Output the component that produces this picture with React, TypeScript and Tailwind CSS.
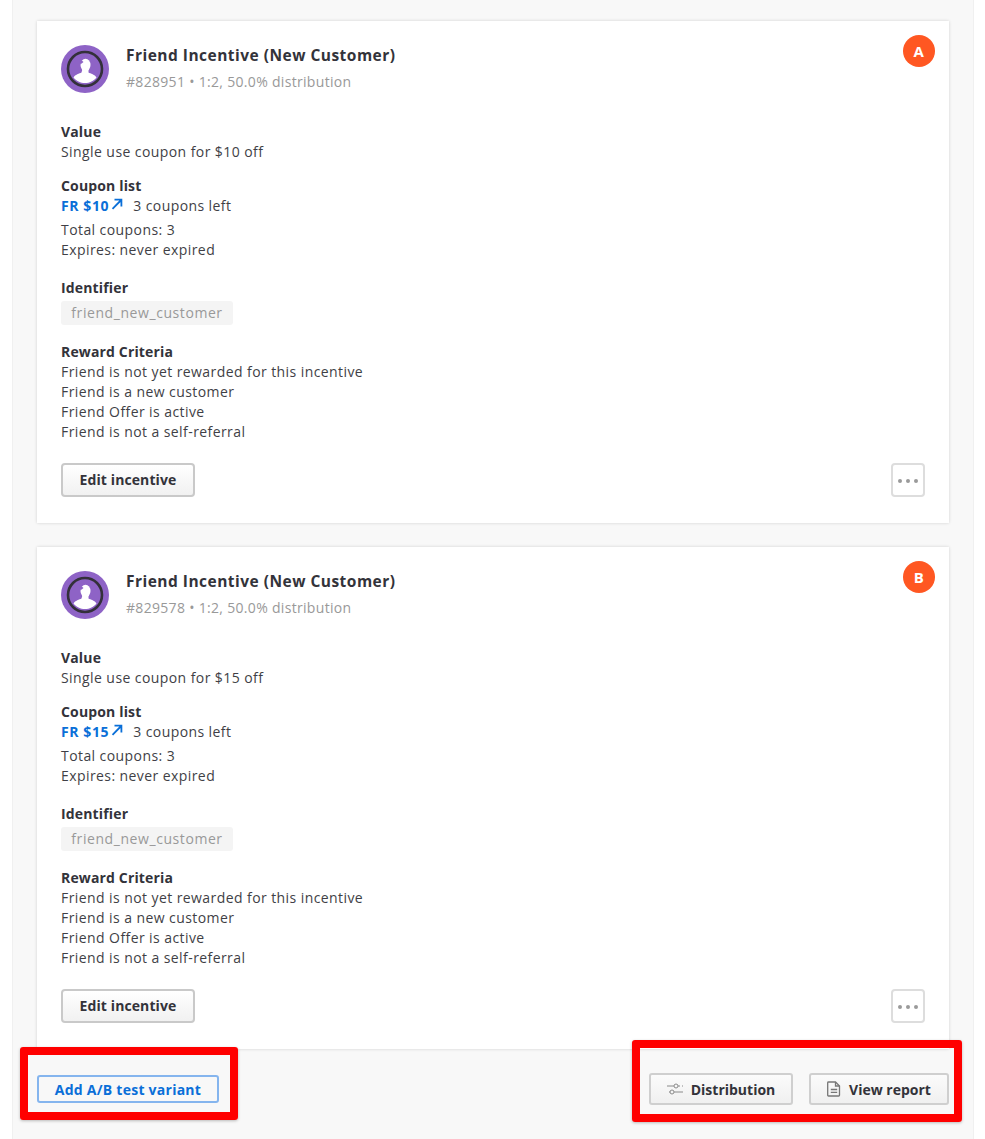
import React from "react";

const font = { fontFamily: '"Open Sans", "Liberation Sans", sans-serif' };

function Avatar() {
  return (
    <svg width="48" height="48" viewBox="0 0 48 48" className="shrink-0">
      <circle cx="24" cy="24" r="24" fill="#8e63c6" />
      <circle cx="24" cy="24" r="17" fill="none" stroke="#33303a" strokeWidth="2.6" />
      <ellipse cx="24.500" cy="20" rx="5" ry="6.300" fill="#fff" />
      <path d="M21.500 24h6v3.500c2 1.200 6.500 2 8 5-2.600 3.500-7 5.600-11.500 5.600s-8.900-2.100-11.500-5.600c1.500-3 6-3.800 8-5z" fill="#fff" />
      <path d="M18.500 13.500l4 3.500-3.200 2.500z" fill="#8e63c6" />
    </svg>
  );
}

function ExternalArrow() {
  return (
    <svg width="12" height="12" viewBox="0 0 12 12" fill="none" stroke="#0a6fd8" strokeWidth="1.8" className="ml-[2px] mt-[-2px]">
      <path d="M1.500 10.800 L10.200 2 M3.500 1.700 H10.400 V8.600" />
    </svg>
  );
}

function Heading({ children }: { children: React.ReactNode }) {
  return <div className="h-5 font-bold text-[#33333a] leading-5 tracking-[0.15px]">{children}</div>;
}

function Line({ children }: { children: React.ReactNode }) {
  return <div className="h-5 leading-5">{children}</div>;
}

function Card({ letter, id, amount, coupon }: { letter: string; id: string; amount: string; coupon: string }) {
  return (
    <div className="relative h-[502px] bg-white px-6 pt-6 shadow-[0_0_3px_rgba(0,0,0,0.16)] text-[14px] text-[#3f3f46] tracking-[0.42px]">
      <div className="absolute right-[14px] top-[14px] flex h-8 w-8 items-center justify-center rounded-full bg-[#ff5722] text-[15px] font-bold text-white">
        {letter}
      </div>
      <div className="flex h-12 items-start gap-[17px]">
        <Avatar />
        <div>
          <div className="mt-[-2px] h-[24px] text-[15.500px] font-bold leading-[24px] text-[#33333a] tracking-[0.48px]">
            Friend Incentive (New Customer)
          </div>
          <div className="mt-[5px] h-5 leading-5 text-[#999999] tracking-[0.31px]">#{id} • 1:2, 50.0% distribution</div>
        </div>
      </div>
      <div className="mt-[29px]">
        <Heading>Value</Heading>
        <Line>Single use coupon for ${amount} off</Line>
      </div>
      <div className="mt-[14px]">
        <Heading>Coupon list</Heading>
        <div className="mt-[-1px] flex h-5 items-center">
          <span className="font-bold text-[#0a6fd8] tracking-[0.6px]">{coupon}</span>
          <ExternalArrow />
          <span className="ml-[10px]">3 coupons left</span>
        </div>
        <div className="mt-[5px]">
          <Line>Total coupons: 3</Line>
          <Line>Expires: never expired</Line>
        </div>
      </div>
      <div className="mt-[18px]">
        <Heading>Identifier</Heading>
        <div className="mt-[3px] flex h-6 w-[172px] items-center justify-center rounded-[3px] bg-[#f4f4f4] pb-[2px] text-[#999999] tracking-[0.57px]">
          friend_new_customer
        </div>
      </div>
      <div className="mt-[17px]">
        <Heading>Reward Criteria</Heading>
        <Line>Friend is not yet rewarded for this incentive</Line>
        <Line>Friend is a new customer</Line>
        <Line>Friend Offer is active</Line>
        <Line>Friend is not a self-referral</Line>
      </div>
      <div className="mt-[21px] flex items-center justify-between">
        <button className="flex h-[34px] w-[134px] items-center justify-center rounded-[4px] border-2 border-[#c9c9c9] bg-gradient-to-b from-white to-[#f1f1f1] pb-[1px] font-bold text-[#33333a] tracking-[0.1px]">
          Edit incentive
        </button>
        <button className="flex h-[34px] w-[34px] items-center justify-center gap-[4px] rounded-[4px] border-2 border-[#dddddd] bg-white pt-[2px]">
          <span className="h-[4px] w-[4px] rounded-full bg-[#9a9a9a]" />
          <span className="h-[4px] w-[4px] rounded-full bg-[#9a9a9a]" />
          <span className="h-[4px] w-[4px] rounded-full bg-[#9a9a9a]" />
        </button>
      </div>
    </div>
  );
}

function SlidersIcon() {
  return (
    <svg width="16" height="14" viewBox="0 0 16 14" fill="none" stroke="#8a8a8a" strokeWidth="1">
      <path d="M0 4h7M11 4h2M15 4h1M2 10h1M7 10h9" />
      <circle cx="9" cy="4" r="2" />
      <circle cx="5" cy="10" r="2" />
    </svg>
  );
}

function DocIcon() {
  return (
    <svg width="14" height="16" viewBox="0 0 14 16" fill="none" stroke="#777777" strokeWidth="1.300">
      <path d="M1.500 1h7l4 4v9.200a.8.8 0 0 1-.8.8H1.500a.8.8 0 0 1-.8-.8V1.800a.8.8 0 0 1 .8-.8z" />
      <path d="M8.500 1v4h4M3.800 8.500h6.400M3.800 11.300h6.400" />
    </svg>
  );
}

export default function App() {
  return (
    <div className="relative h-[1139px] w-[985px] overflow-hidden bg-white" style={font}>
      <div className="ml-[12px] h-full w-[962px] border-x border-[#f0f0f0] bg-[#f8f8f8] pl-6 pr-6 pt-[21px]">
        <div className="flex flex-col gap-6">
          <Card letter="A" id="828951" amount="10" coupon="FR $10" />
          <Card letter="B" id="829578" amount="15" coupon="FR $15" />
        </div>
        <div className="mt-6 flex items-center justify-between text-[14px] font-bold">
          <button className="h-7 w-[182px] rounded-[3px] border-2 border-[#85b5ee] bg-[#f8f8f8] text-[#0a6fd8] tracking-[0.25px]">
            Add A/B test variant
          </button>
          <div className="flex gap-4 text-[#33333a]">
            <button className="flex h-8 w-[144px] items-center justify-center gap-2 rounded-[3px] border-2 border-[#cfcfcf] bg-gradient-to-b from-[#fbfbfb] to-[#f0f0f0]">
              <SlidersIcon />
              Distribution
            </button>
            <button className="flex h-8 w-[140px] items-center justify-center gap-2 rounded-[3px] border-2 border-[#cfcfcf] bg-gradient-to-b from-[#fbfbfb] to-[#f0f0f0]">
              <DocIcon />
              View report
            </button>
          </div>
        </div>
      </div>
      <div className="absolute left-[20px] top-[1047px] h-[73px] w-[218px] rounded-[3px] border-[8px] border-[#ff0000] shadow-[0_1px_3px_rgba(0,0,0,0.25)]" />
      <div className="absolute left-[632px] top-[1040px] h-[82px] w-[330px] rounded-[3px] border-[8px] border-[#ff0000] shadow-[0_1px_3px_rgba(0,0,0,0.25)]" />
    </div>
  );
}
